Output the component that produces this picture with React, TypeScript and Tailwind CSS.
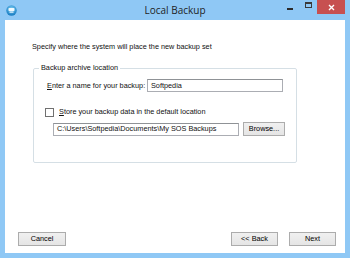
import React from "react";

function Btn({ label, w }: { label: string; w: string }) {
  return (
    <div
      className={`${w} h-[14px] flex items-center justify-center border border-[#acacac] bg-gradient-to-b from-[#f0f0f0] to-[#e5e5e5] text-[7.3px] text-black leading-none whitespace-nowrap`}
    >
      {label}
    </div>
  );
}

export default function App() {
  return (
    <div
      className="w-[350px] h-[258px] flex flex-col bg-[#8fc8f5] overflow-hidden"
      style={{ fontFamily: '"Liberation Sans", Arial, sans-serif' }}
    >
      {/* Title bar */}
      <div className="h-[20px] grid grid-cols-[1fr_auto_1fr] items-start">
        <div className="flex items-center pl-[6px] pt-[5px]">
          <svg width="11" height="11" viewBox="0 0 11 11">
            <defs>
              <radialGradient id="g" cx="50%" cy="35%" r="60%">
                <stop offset="0%" stopColor="#7fd0f5" />
                <stop offset="100%" stopColor="#1a7fc4" />
              </radialGradient>
            </defs>
            <circle cx="5.5" cy="5.5" r="5.2" fill="url(#g)" />
            <rect x="2.5" y="3" width="6" height="3" rx="0.8" fill="#ffffff" opacity="0.9" />
            <rect x="3.5" y="6.5" width="4" height="1.2" fill="#e8f6ff" />
          </svg>
        </div>
        <div className="pt-[4px] text-[10px] leading-[12px] text-[#1e1e1e]" style={{ fontFamily: '"Open Sans", "Noto Sans", sans-serif' }}>
          Local Backup
        </div>
        <div className="flex justify-end items-start">
          <div className="w-[18px] h-[14px] flex items-center justify-center">
            <div className="w-[6px] h-[2px] bg-[#2b2b2b] mt-[4px]" />
          </div>
          <div className="w-[18px] h-[14px] flex items-center justify-center">
            <div className="w-[7px] h-[6px] border border-[#3a3a3a] border-t-2 -mt-[4px]" />
          </div>
          <div className="w-[28px] h-[14px] mr-[5px] bg-[#c75050] flex items-center justify-center">
            <svg width="7" height="7" viewBox="0 0 7 7">
              <path d="M1 1 L6 6 M6 1 L1 6" stroke="#ffffff" strokeWidth="1.4" />
            </svg>
          </div>
        </div>
      </div>

      {/* Client area */}
      <div className="mx-[5px] mb-[5px] flex-1 bg-white flex flex-col text-[7.3px] text-[#111] leading-[10px]">
        <div className="pl-[27px] pt-[22px] whitespace-nowrap">
          Specify where the system will place the new backup set
        </div>

        <fieldset className="ml-[28px] mt-[11px] w-[264px] h-[100px] border border-[#d5dfe5] rounded-[2px] px-0 pb-0">
          <legend className="ml-[5px] px-[2px] leading-[10px] whitespace-nowrap">Backup archive location</legend>

          <div className="flex items-center mt-[6px] ml-[13px]">
            <span className="w-[100px] shrink-0 whitespace-nowrap">
              <span className="underline">E</span>nter a name for your backup:
            </span>
            <div className="w-[136px] h-[13px] border border-[#abadb3] border-t-[#8f9296] flex items-center pl-[3px]">
              Softpedia
            </div>
          </div>

          <div className="flex items-center mt-[15px] ml-[11px]">
            <div className="w-[9px] h-[9px] border border-[#707070] bg-white" />
            <span className="ml-[5px] whitespace-nowrap">
              <span className="underline">S</span>tore your backup data in the default location
            </span>
          </div>

          <div className="flex items-center mt-[5px] ml-[19px]">
            <div className="w-[186px] h-[13px] border border-[#abadb3] border-t-[#8f9296] flex items-center pl-[3px] whitespace-nowrap">
              C:\Users\Softpedia\Documents\My SOS Backups
            </div>
            <div className="ml-[4px]">
              <Btn label="Browse..." w="w-[42px]" />
            </div>
          </div>
        </fieldset>

        <div className="flex-1" />
        <div className="flex items-center pl-[13px] pr-[9px] pb-[7px]">
          <Btn label="Cancel" w="w-[48px]" />
          <div className="flex-1" />
          <Btn label="<< Back" w="w-[47px]" />
          <div className="ml-[11px]">
            <Btn label="Next" w="w-[47px]" />
          </div>
        </div>
      </div>
    </div>
  );
}
